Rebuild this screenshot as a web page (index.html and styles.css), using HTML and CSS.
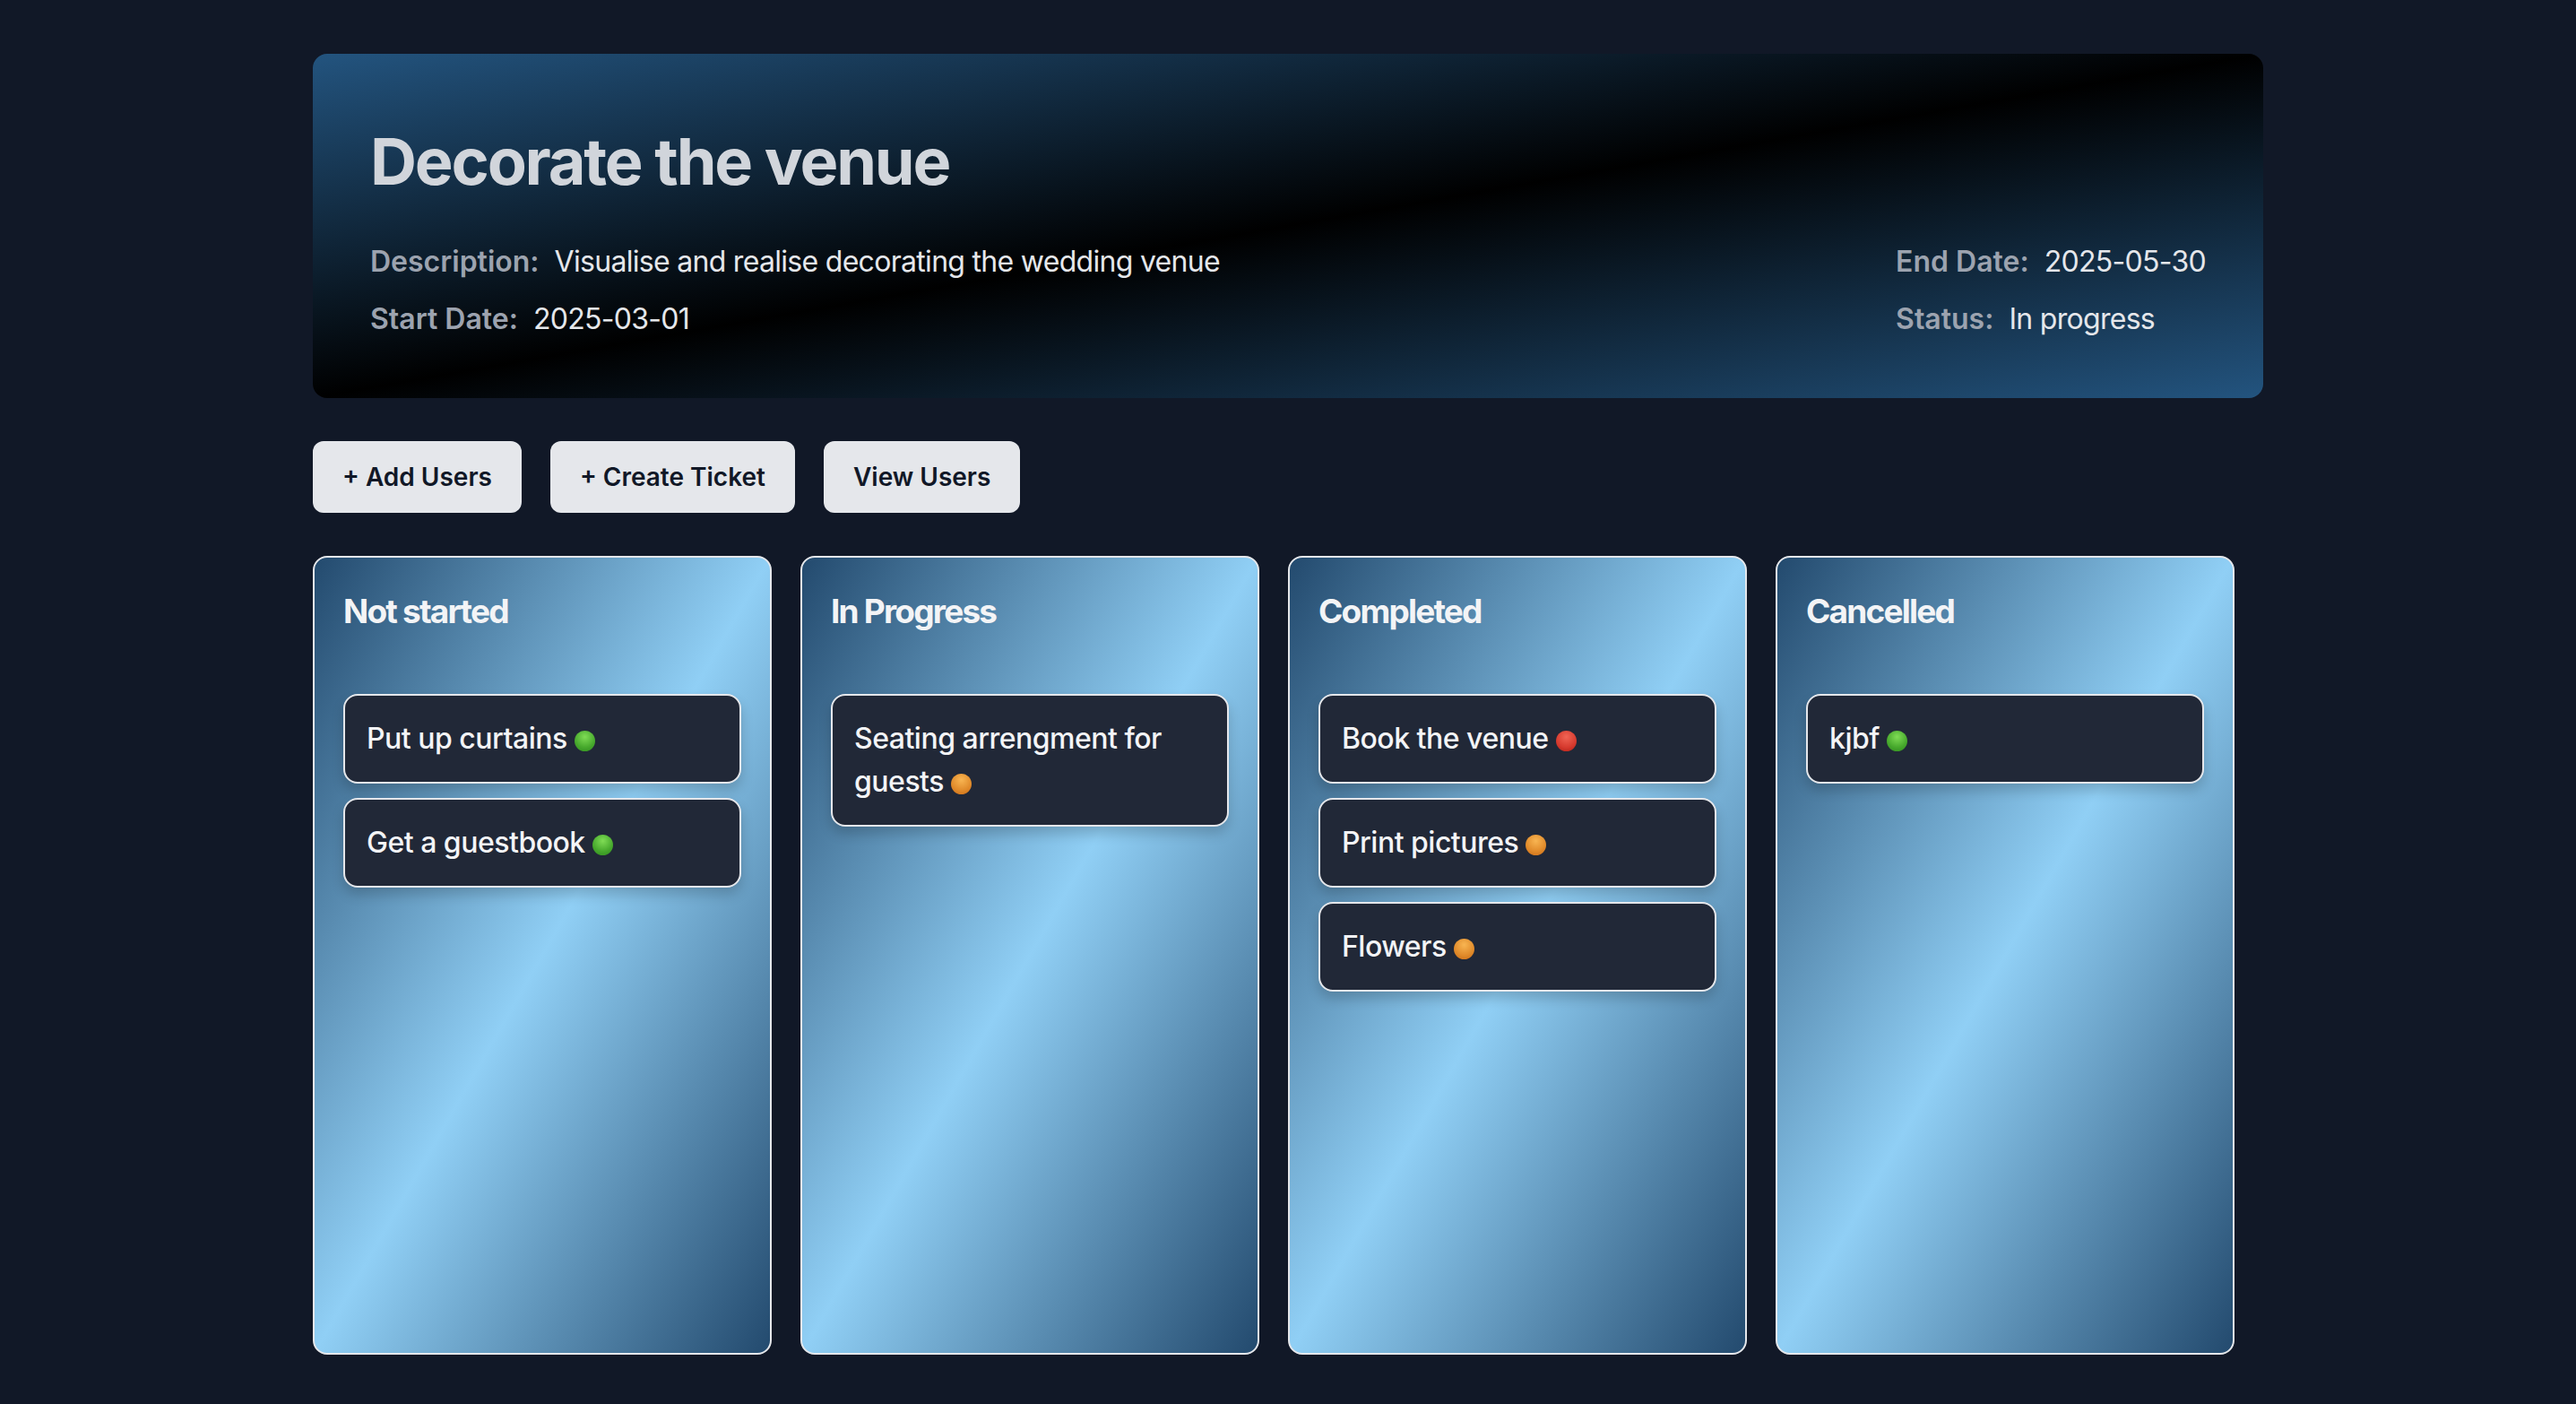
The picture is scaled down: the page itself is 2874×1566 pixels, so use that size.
FILE: index.html
```html
<!DOCTYPE html>
<html lang="en">
<head>
<meta charset="utf-8">
<title>Decorate the venue</title>
<link rel="stylesheet" href="styles.css">
</head>
<body>
<div class="page">
  <header class="project">
    <h1 class="project-title">Decorate the venue</h1>
    <div class="project-info">
      <div class="info-col">
        <p class="info-row"><span class="info-label">Description:</span> <span class="info-value">Visualise and realise decorating the wedding venue</span></p>
        <p class="info-row"><span class="info-label">Start Date:</span> <span class="info-value">2025-03-01</span></p>
      </div>
      <div class="info-col">
        <p class="info-row"><span class="info-label">End Date:</span> <span class="info-value">2025-05-30</span></p>
        <p class="info-row"><span class="info-label">Status:</span> <span class="info-value">In progress</span></p>
      </div>
    </div>
  </header>

  <div class="actions">
    <button class="btn">+ Add Users</button>
    <button class="btn">+ Create Ticket</button>
    <button class="btn">View Users</button>
  </div>

  <div class="board">
    <section class="column">
      <h2 class="column-title">Not started</h2>
      <div class="cards">
        <div class="card">Put up curtains <span class="dot dot-green"></span></div>
        <div class="card">Get a guestbook <span class="dot dot-green"></span></div>
      </div>
    </section>
    <section class="column">
      <h2 class="column-title">In Progress</h2>
      <div class="cards">
        <div class="card">Seating arrengment for guests <span class="dot dot-orange"></span></div>
      </div>
    </section>
    <section class="column">
      <h2 class="column-title">Completed</h2>
      <div class="cards">
        <div class="card">Book the venue <span class="dot dot-red"></span></div>
        <div class="card">Print pictures <span class="dot dot-orange"></span></div>
        <div class="card">Flowers <span class="dot dot-orange"></span></div>
      </div>
    </section>
    <section class="column">
      <h2 class="column-title">Cancelled</h2>
      <div class="cards">
        <div class="card">kjbf <span class="dot dot-green"></span></div>
      </div>
    </section>
  </div>
</div>
</body>
</html>
```

FILE: styles.css
```css
* {
  box-sizing: border-box;
}

html, body {
  margin: 0;
  padding: 0;
  background: #111827;
  overflow: hidden;
}

body {
  font-family: Inter, "Noto Sans", sans-serif;
  color: #e5e7eb;
}

.page {
  max-width: 2304px;
  margin: 0 auto;
  padding: 60px 64px 0;
}

.project {
  background: linear-gradient(to bottom right, #23547f, #000000 50%, #23547f);
  border-radius: 16px;
  padding: 80px 64px 64px;
}

.project-title {
  margin: 0 0 48px;
  font-size: 72px;
  line-height: 80px;
  font-weight: 700;
  letter-spacing: -2.2px;
  color: #d1d5db;
}

.project-info {
  display: flex;
  justify-content: space-between;
}

.info-col {
  display: flex;
  flex-direction: column;
  gap: 16px;
}

.info-row {
  margin: 0;
  font-size: 32px;
  line-height: 48px;
}

.info-label {
  font-weight: 600;
  color: #9ca3af;
  margin-right: 8px;
}

.info-value {
  color: #e5e7eb;
  letter-spacing: -0.7px;
}

.actions {
  display: flex;
  gap: 32px;
  margin-top: 48px;
}

.btn {
  font-family: Inter, "Noto Sans", sans-serif;
  font-size: 28px;
  line-height: 40px;
  font-weight: 600;
  color: #111827;
  background: #e5e7eb;
  border: none;
  border-radius: 12px;
  padding: 20px 33px;
}

.board {
  display: flex;
  gap: 32px;
  margin-top: 48px;
}

.column {
  width: 512px;
  height: 891px;
  flex: none;
  border: 2px solid #e5e7eb;
  border-radius: 16px;
  padding: 32px;
  background: linear-gradient(to bottom right, #234a6e, #90cff5 50%, #234a6e);
}

.column-title {
  margin: 0 0 64px;
  font-size: 37px;
  line-height: 56px;
  font-weight: 700;
  letter-spacing: -1.8px;
  color: #f3f4f6;
}

.cards {
  display: flex;
  flex-direction: column;
  gap: 16px;
}

.card {
  background: #212837;
  border: 2px solid #e5e7eb;
  border-radius: 16px;
  padding: 24px;
  font-size: 32px;
  line-height: 48px;
  font-weight: 500;
  letter-spacing: -0.5px;
  color: #f3f4f6;
  box-shadow: 0 8px 14px rgba(0, 0, 0, 0.18);
}

.dot {
  display: inline-block;
  width: 23px;
  height: 23px;
  border-radius: 50%;
  vertical-align: -3px;
}

.dot-green {
  background: radial-gradient(circle at 50% 30%, #7fdc55, #46a82c 60%, #2f8a1f);
}

.dot-orange {
  background: radial-gradient(circle at 50% 30%, #f8b552, #e08a2a 60%, #c96a16);
}

.dot-red {
  background: radial-gradient(circle at 50% 30%, #f06454, #d63a2e 60%, #b01e16);
}
```
